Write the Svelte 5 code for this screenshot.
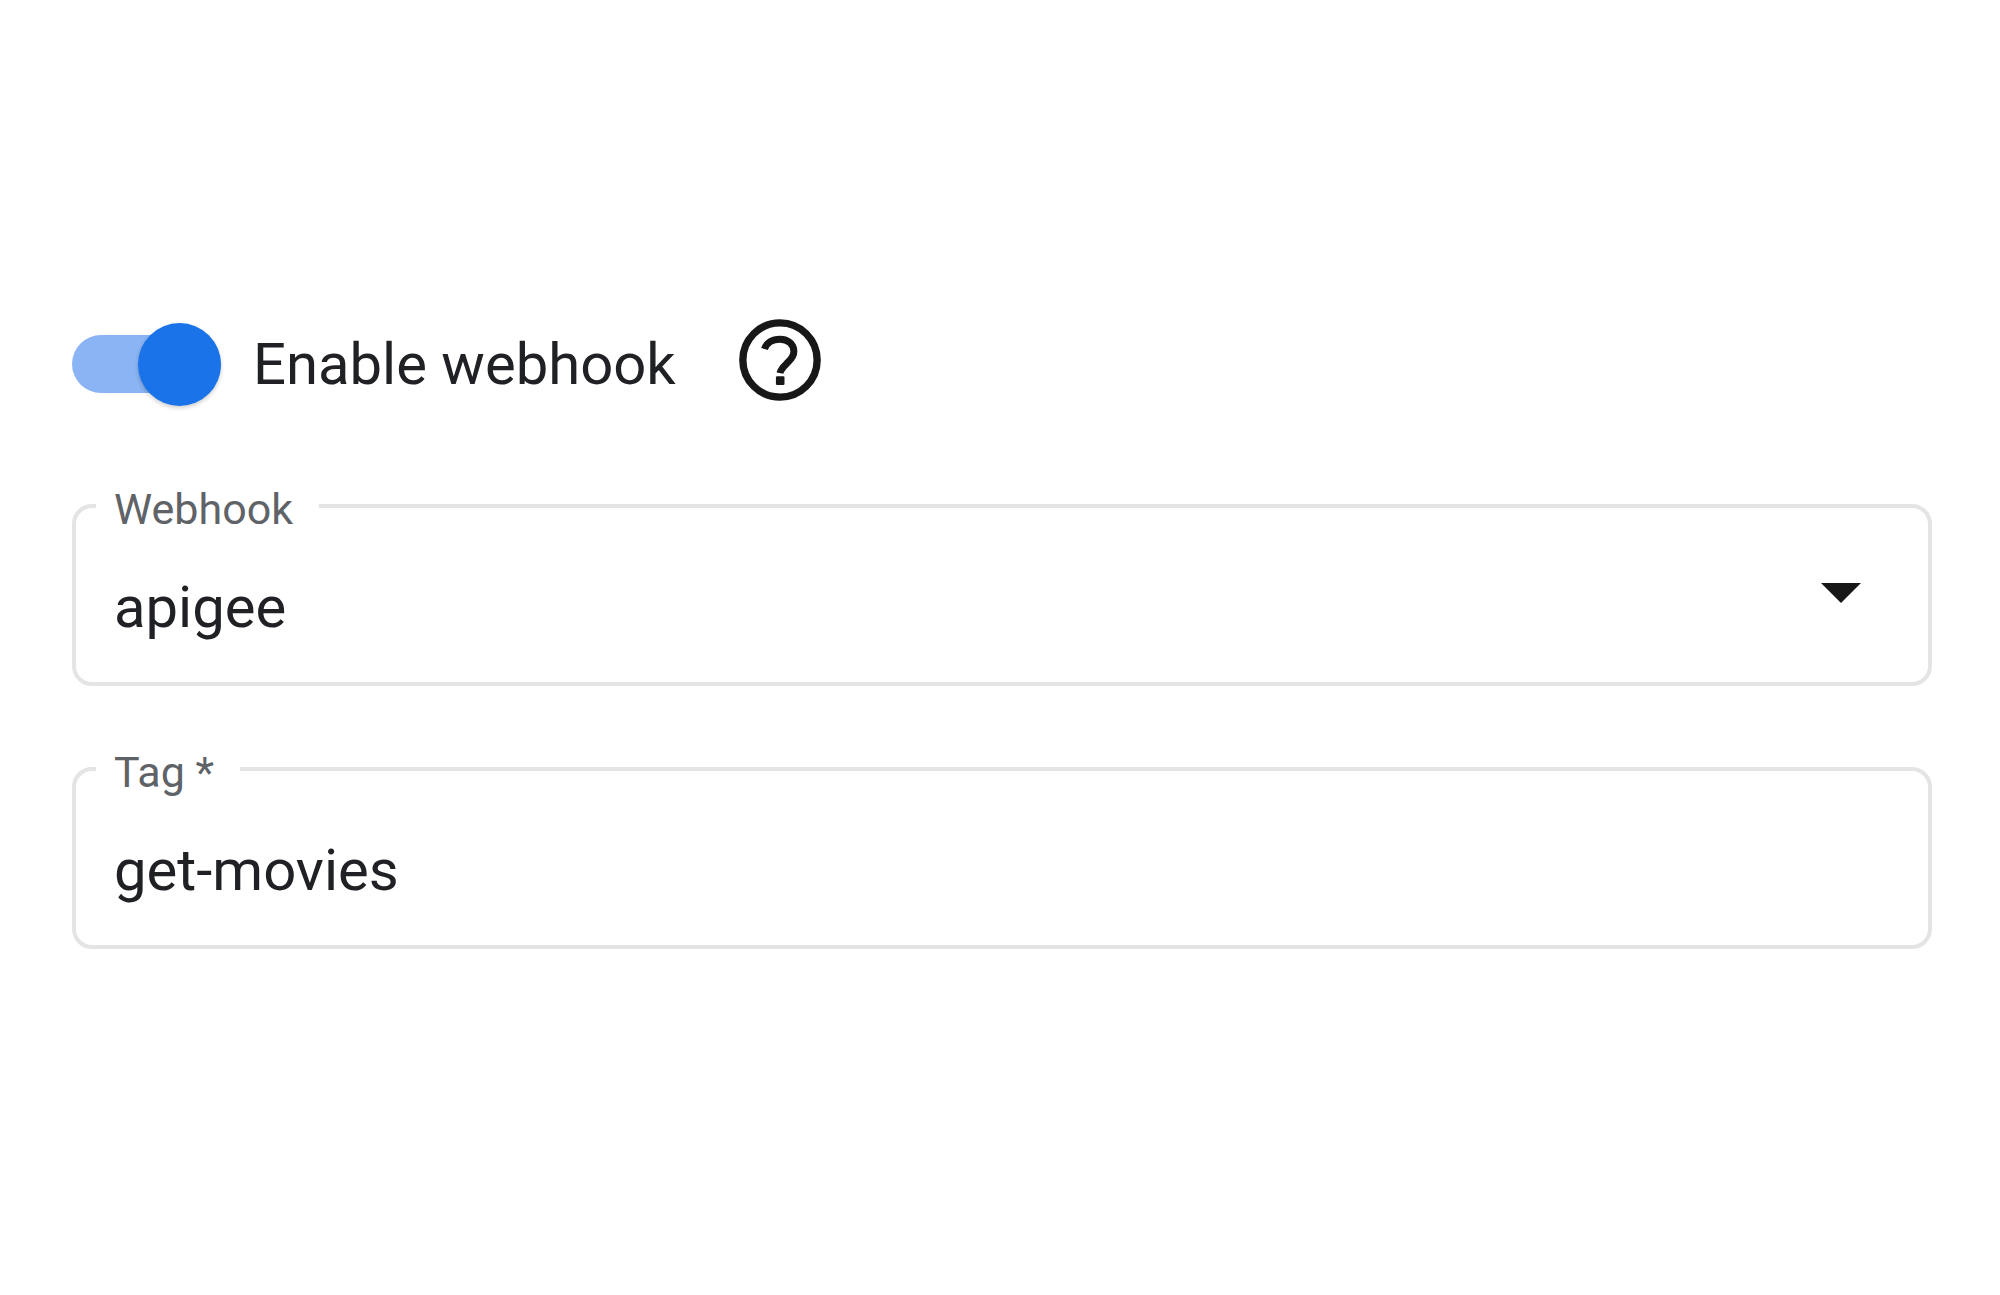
<script lang="ts">
	let enabled = $state(true);
	let webhook = $state('apigee');
	let tag = $state('get-movies');

	const webhooks = ['apigee'];
</script>

<main class="panel">
	<div class="toggle-row">
		<label class="toggle">
			<input type="checkbox" role="switch" bind:checked={enabled} />
			<span>Enable webhook</span>
		</label>
		<button type="button" class="help" aria-label="Help">
			<svg viewBox="0 0 24 24" aria-hidden="true">
				<circle cx="12" cy="12" r="9.1" />
				<path
					class="mark"
					d="M8.2 9.3C8.7 7.8 10.1 6.9 12 6.9c2 0 3.4 1.3 3.4 3 0 1.1-.6 1.8-1.4 2.6-1 1-1.8 1.6-2 2.7"
				/>
				<rect x="11" y="16" width="2.1" height="2.1" rx="0.3" />
			</svg>
		</button>
	</div>

	<fieldset class="field">
		<legend><label for="webhook">Webhook</label></legend>
		<div class="control">
			<select id="webhook" bind:value={webhook}>
				{#each webhooks as name}
					<option value={name}>{name}</option>
				{/each}
			</select>
			<svg class="arrow" viewBox="0 0 40 20" aria-hidden="true">
				<path d="M0 0h40L20 20z" />
			</svg>
		</div>
	</fieldset>

	<fieldset class="field">
		<legend><label for="tag">Tag *</label></legend>
		<div class="control">
			<input id="tag" type="text" required bind:value={tag} />
		</div>
	</fieldset>
</main>

<style>
	:global(body) {
		margin: 0;
		background: #fff;
	}

	.panel {
		display: flex;
		flex-direction: column;
		padding: 311px 68px 80px 72px;
		font-family: Roboto, sans-serif;
		font-size: 58px;
		color: #202124;
	}

	.toggle-row {
		display: flex;
		align-items: center;
		gap: 55px;
		margin-bottom: 70px;
	}

	.toggle {
		display: flex;
		align-items: center;
		gap: 32px;
		padding-top: 8px;
		line-height: 88px;
		cursor: pointer;
	}

	.toggle input {
		appearance: none;
		display: flex;
		align-items: center;
		width: 149px;
		height: 58px;
		margin: 0;
		border-radius: 29px;
		background: #bdc1c6;
	}

	.toggle input::before {
		content: '';
		width: 83px;
		height: 83px;
		flex: none;
		border-radius: 50%;
		background: #fff;
		box-shadow: 0 2px 4px rgba(0, 0, 0, 0.2);
	}

	.toggle input:checked {
		justify-content: flex-end;
		background: #8ab4f3;
	}

	.toggle input:checked::before {
		background: #1a73e8;
	}

	.help {
		display: flex;
		padding: 0;
		border: 0;
		background: none;
		cursor: pointer;
	}

	.help svg {
		width: 98px;
		height: 98px;
		fill: none;
		stroke: #171717;
		stroke-width: 1.8;
	}

	.help .mark {
		stroke-width: 1.7;
	}

	.help rect {
		fill: #171717;
		stroke: none;
	}

	.field {
		min-width: 0;
		margin: 0 0 56px;
		padding: 0 20px;
		border: 4px solid #e4e4e4;
		border-radius: 20px;
	}

	legend {
		padding: 6px 26px 0 18px;
		font-size: 43px;
		line-height: 48px;
		color: #5f6368;
	}

	.control {
		display: flex;
		align-items: center;
		padding: 38px 47px 39px 18px;
	}

	.control select,
	.control input {
		appearance: none;
		flex: 1;
		min-width: 0;
		height: 72px;
		margin: 0;
		padding: 0;
		border: 0;
		outline: 0;
		background: none;
		font: inherit;
		color: inherit;
	}

	.arrow {
		width: 40px;
		height: 20px;
		margin-bottom: 28px;
		fill: #171717;
	}
</style>
